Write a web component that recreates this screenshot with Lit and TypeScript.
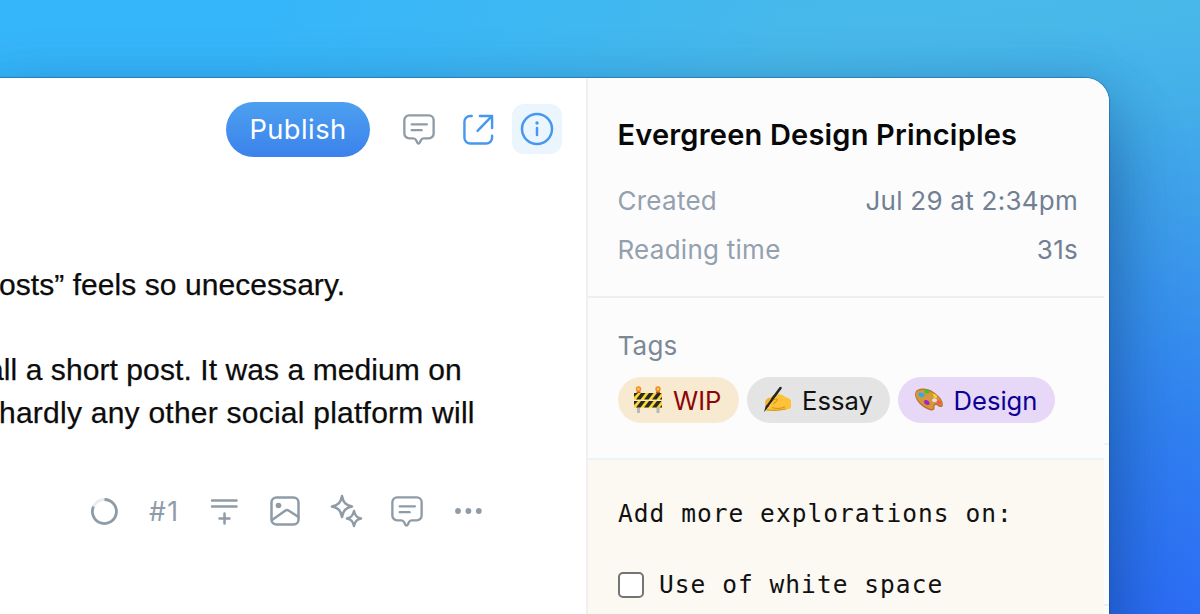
import { LitElement, html, css } from "lit";
import { customElement } from "lit/decorators.js";

const chat = html`<svg class="i" width="34" height="34" viewBox="0 0 36 36"><path d="M7.500 2.500h21a5 5 0 0 1 5 5v14.300a5 5 0 0 1-5 5h-5.400c-1.600 0-2.200.6-3.100 2l-1 2.200c-.9 1.900-2.200 1.900-3 0l-1-2.200c-.8-1.500-1.600-2-3.100-2H7.500a5 5 0 0 1-5-5V7.500a5 5 0 0 1 5-5Z"/><path d="M10.300 12h16M10.300 18.200h10.500"/></svg>`;

const barrier = html`<svg width="30" height="30" viewBox="0 0 30 30"><path d="M5.500 20v8M25 20v8" stroke="#b9b9b9" stroke-width="3"/><circle cx="5.500" cy="4" r="2.700" fill="#f58a1f"/><circle cx="25" cy="4" r="2.700" fill="#f58a1f"/><circle cx="5.500" cy="4" r="1.200" fill="#ffd85b"/><circle cx="25" cy="4" r="1.200" fill="#ffd85b"/><path d="M3.500 6.500h4v2h-4zM23 6.500h4v2h-4z" fill="#d84b20"/><path d="M1 8h28v6.500H1zM1 16h28v6.500H1z" fill="#f8d633"/><path d="M1 12V8h4zM8 8h4.500l-5 6.500H3zM16 8h4.500l-5 6.500H11zM24 8h4.500l-5 6.500H19zM29 12v2.500h-2.500zM1 20v-4h4zM8 16h4.500l-5 6.500H3zM16 16h4.500l-5 6.500H11zM24 16h4.500l-5 6.500H19zM29 20v2.500h-2.500z" fill="#292821"/></svg>`;
const hand = html`<svg width="30" height="30" viewBox="0 0 30 30"><path d="M7 14 11 10c3-1.800 8.500-1.500 12 1.700 3 1.500 5.600 1.700 6 4.300v6c-.4 2.200-3 2.200-6 2.500-6 1.200-12 1.500-19.500 1-1.600-.2-1.300-1.900.2-2.200l4-1.300c-2-.8-2.600-2.200-2-4Z" fill="#fbc335"/><path d="M9 17.500c1-2 4-3.800 6.300-3.500 1 1.200-2.300 3-3.800 5.200M10 22.500c4.500 1.600 9 1.200 13-.8M5 25c7 .7 14 .2 19-1" fill="none" stroke="#dd9426" stroke-width="1.100"/><path d="M18.500 3 5.500 20.500" stroke="#242424" stroke-width="2.600" stroke-linecap="round"/><path d="m4.300 19 2.700 2-5 6.200Z" fill="#242424"/><path d="M3.500 16c.5-2.500 3.500-4 6-3l-2.500 6.500-3.500 1.200C3 19.500 3 17.500 3.500 16Z" fill="#f4b22c"/><path d="m10.500 13.500-6.500 9" stroke="#242424" stroke-width="1.600"/></svg>`;
const palette = html`<svg width="30" height="30" viewBox="0 0 30 30"><path d="M1.500 7C3 3 12 2 19.500 7c6 4 10 9 9.300 13.500-.6 2.200-3.600 1.800-5 .2-1.500-1.500-3.800-.8-3.300 1.300.6 2.500-1.400 4.500-4.500 3.200C6.500 22-.8 13 1.500 7Z" fill="#b8722a"/><path d="M2 7.500C4 3.800 12 3.500 19 8c5.500 3.600 9 8 9 12-1.600 1-3.200-.3-4-1-2-1.500-5-.3-4.700 2.700.3 2-1.300 3-3.300 2.100C7 20.500.4 12.500 2 7.500Z" fill="#d8963c"/><ellipse cx="20.500" cy="15.200" rx="2.400" ry="1.900" fill="#e7d8f7"/><path d="M5 7.500c1.600-.8 2 1.300 3.300.6 2-.6 3.300 2 1.500 3.500-2 1.500-5.500.2-5.300-2Z" fill="#29aee8"/><path d="M11 4c1.400 0 2 1 3.500 1.300 1.500.7 1.600 3-.6 3.200-2 .2-3.900-1-3.400-2.500Z" fill="#3fc42a"/><path d="M18.500 8.500c1.200.2 3.800 1 4.700 2.800.4 1.500-1.300 2-2.700 1.500-1.700-.7-.8-2.600-2-4.300Z" fill="#f4d721"/><path d="M24 15c1.600.2 3.500 2 3.400 3.600-.5 1.300-3.500.8-4.300-.7-.4-1.200.6-1.700.9-2.900Z" fill="#f1574b"/><path d="M10 16c1-1.600 3.300-1 4.500.3 2 1.600 1.300 4-.8 3.800-1.900-.2-4.200-2-3.700-4.100Z" fill="#9b2bc4"/></svg>`;

@customElement("app-root")
export class AppRoot extends LitElement {
  static styles = css`
    :host { display: block; width: 1200px; height: 614px; overflow: hidden; font-family: Inter, sans-serif; }
    * { box-sizing: border-box; }
    svg { display: block; flex: none; }
    .i { fill: none; stroke: currentColor; stroke-width: 2.500; stroke-linecap: round; stroke-linejoin: round; }
    .desk { height: 614px; padding-top: 78px; overflow: hidden;
      background: radial-gradient(ellipse 780px 420px at 0 0, #36b6fa 0%, #36b6fa 35%, #36b6fa00 100%), linear-gradient(172deg, #42b9ee 0%, #48b8e9 22%, #44b0e9 33%, #3ea0ea 47%, #3080f0 76%, #2c6cf5 100%); }
    .window { width: 1109px; height: 700px; display: flex; background: #fff; border-radius: 0 24px 0 0; overflow: hidden; }
    .shade { width: 1109px; border-radius: 0 24px 0 0; box-shadow: 0 0 1px 1px #194f9277, 0 10px 50px 8px #10467a38, 0 52px 75px 0 #092b6260; }
    .editor { width: 586px; flex: none; display: flex; flex-direction: column; }
    .top { display: flex; align-items: center; height: 55px; margin: 23px 0 0 226px; }
    .publish { width: 144px; height: 55px; margin-top: 1px; border: 0; border-radius: 28px; color: #fff; background: linear-gradient(#4da0f0, #3b82eb); font: 400 27.300px/55px Inter, sans-serif; letter-spacing: .45px; padding: 0; text-align: center; }
    .top .note { color: #8f9ca8; margin: 3px 0 0 32px; }
    .top .open { color: #4797ee; margin: 1px 0 0 26px; }
    .info { width: 50px; height: 50px; margin-left: 17px; border-radius: 12px; background: #ebf5fe; color: #4797ee; display: grid; place-items: center; }
    .copy { font-family: "Liberation Sans", sans-serif; font-size: 30px; line-height: 43px; color: #0c0c0c; -webkit-text-stroke: .25px #0c0c0c; white-space: pre; margin-top: 107px; height: 171px; }
    .p { margin: 0 0 42px; height: 43px; }
    .p2 { margin: 0; }
    .l1, .l2, .l3 { display: block; }
    .l1 { text-indent: -1px; letter-spacing: .06px; }
    .l2 { text-indent: -13px; letter-spacing: .08px; }
    .l3 { text-indent: -1px; letter-spacing: .24px; }
    .tools { display: flex; align-items: center; height: 40px; margin: 57px 0 0 90px; color: #8f9ca8; }
    .num { width: 31px; margin: -1px 0 0 30px; font-size: 26.500px; letter-spacing: 1.500px; white-space: nowrap; }
    .side { width: 523px; flex: none; display: flex; background: #fcfcfd; border-left: 2px solid #f0f0f1; }
    .main { width: 516px; }
    .scroll { width: 5px; padding-top: 365px; }
    .track { height: 163px; border-top: 2px solid #f1f2f4; border-bottom: 2px solid #edf0f2; }
    .meta { height: 220px; padding: 36px 26px 0 29.500px; border-bottom: 2px solid #edf0f2; }
    .title { margin: 0 0 23px; font-size: 29px; line-height: 42px; font-weight: 600; letter-spacing: .2px; color: #080808; white-space: nowrap; }
    .row { display: flex; justify-content: space-between; height: 49px; line-height: 43px; font-size: 26px; letter-spacing: .26px; color: #94a0ad; }
    .val { color: #718093; }
    .tags { height: 162px; padding: 26px 0 0 29.500px; border-bottom: 2px solid #edf2f4; }
    .label { font-size: 26px; line-height: 43px; letter-spacing: .2px; color: #7b8997; }
    .chips { display: flex; gap: 8px; margin-top: 10px; }
    .chip { display: flex; align-items: center; height: 46px; border-radius: 23px; padding-left: 15.500px; gap: 10px; font-size: 25.600px; white-space: nowrap; }
    .wip { width: 121px; background: #f7ead0; color: #8c0505; }
    .essay { width: 143px; background: #e4e4e4; color: #111; }
    .design { width: 157px; background: #e7d8f7; color: #0c0096; padding-left: 16px; }
    .notes { height: 260px; background: #fcf8f2; padding: 33px 0 0 30px; font: 24.500px/42px "DejaVu Sans Mono", monospace; letter-spacing: 1.040px; color: #111; white-space: nowrap; }
    .todo { display: flex; align-items: center; margin-top: 29px; gap: 15px; }
    .box { width: 26px; height: 26px; border: 2px solid #747474; border-radius: 5px; background: #fff; }
    .g1 { margin-left: 28px; } .g2 { margin: -1px 0 0 29px; } .g3 { margin: -1px 0 0 27px; } .g4 { margin: 1px 0 0 26px; } .g5 { margin-left: 30px; }
  `;
  render() {
    return html`<div class="desk"><div class="shade"><div class="window">
      <main class="editor">
        <header class="top">
          <button class="publish">Publish</button>
          <span class="note">${chat}</span>
          <span class="open"><svg class="i" width="33" height="33" viewBox="0 0 34 34"><path d="M10 3H8.500a6 6 0 0 0-6 6v16.500a6 6 0 0 0 6 6H25a6 6 0 0 0 6-6V23.500M16 18.500 30.500 3.500M18.500 3H31v12.500"/></svg></span>
          <span class="info"><svg class="i" width="34" height="34" viewBox="0 0 34 34"><circle cx="17" cy="17" r="15"/><path d="M17 16v7"/><circle cx="17" cy="11" r="1.700" fill="currentColor" stroke="none"/></svg></span>
        </header>
        <div class="copy"><p class="p"><span class="l1">osts” feels so unecessary.</span></p><p class="p2"><span class="l2">all a short post. It was a medium on</span><span class="l3">hardly any other social platform will</span></p></div>
        <footer class="tools">
          <svg class="i" width="29" height="29" viewBox="0 0 29 29"><circle cx="14.500" cy="14.500" r="12" stroke="#e9edf0" stroke-width="2.800"/><path d="M14.500 2.500a12 12 0 1 1-11 7" stroke-width="2.800" stroke-linecap="butt"/></svg>
          <span class="num">#1</span>
          <svg class="i g1" width="32" height="32" viewBox="0 0 32 32"><path d="M4 5.500h24.500M4 11.500h24.500M16.500 18.500v10M11.500 23.500h10"/></svg>
          <svg class="i g2" width="32" height="32" viewBox="0 0 32 32"><rect x="2.500" y="2.500" width="27" height="27" rx="5"/><circle cx="9.500" cy="10.500" r="2.800" fill="currentColor" stroke="none"/><path d="m3 25 13.500-9.500c1.200-.8 2-.7 3 0L29.500 22"/></svg>
          <svg class="i g3" width="36" height="36" viewBox="0 0 36 36"><path d="M14 3c1.300 6.500 3.300 9 10 10.500-6.700 1.500-8.700 4-10 10.500-1.300-6.500-3.300-9-10-10.500C10.700 12 12.700 9.500 14 3ZM26 18c1 4.500 2.500 6.500 7 7.500-4.500 1-6 3-7 7.500-1-4.500-2.500-6.500-7-7.500 4.500-1 6-3 7-7.500Z"/></svg>
          <span class="g4">${chat}</span>
          <svg class="g5" width="30" height="8" viewBox="0 0 30 8" fill="currentColor"><circle cx="4" cy="4" r="2.900"/><circle cx="14.400" cy="4" r="2.900"/><circle cx="24.800" cy="4" r="2.900"/></svg>
        </footer>
      </main>
      <aside class="side"><div class="main">
        <section class="meta"><h1 class="title">Evergreen Design Principles</h1>
          <div class="row"><span>Created</span><span class="val">Jul 29 at 2:34pm</span></div>
          <div class="row"><span>Reading time</span><span class="val">31s</span></div></section>
        <section class="tags"><div class="label">Tags</div><div class="chips">
          <span class="chip wip">${barrier}WIP</span><span class="chip essay">${hand}Essay</span><span class="chip design">${palette}Design</span></div></section>
        <section class="notes"><div>Add more explorations on:</div><div class="todo"><span class="box"></span>Use of white space</div></section>
      </div><div class="scroll"><div class="track"></div></div></aside>
    </div></div></div>`;
  }
}
